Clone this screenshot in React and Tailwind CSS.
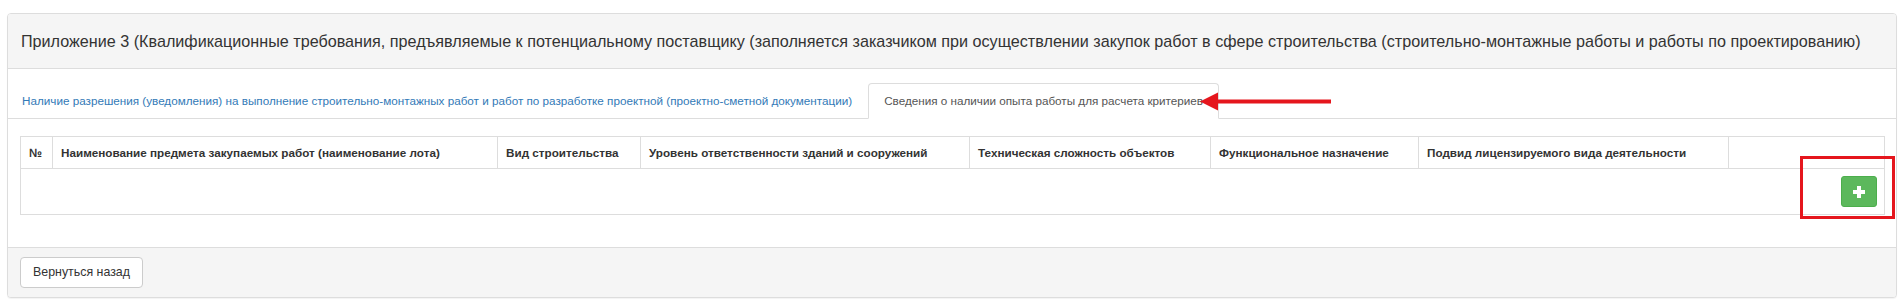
import React from "react";

const columns = [
  { title: "№", width: 32 },
  { title: "Наименование предмета закупаемых работ (наименование лота)", width: 445 },
  { title: "Вид строительства", width: 143 },
  { title: "Уровень ответственности зданий и сооружений", width: 329 },
  { title: "Техническая сложность объектов", width: 241 },
  { title: "Функциональное назначение", width: 208 },
  { title: "Подвид лицензируемого вида деятельности", width: 310 },
  { title: "", width: 156 },
];

const PlusIcon = () => (
  <svg width="12" height="12" viewBox="0 0 12 12">
    <rect x="4" y="0" width="4" height="12" fill="#fff" />
    <rect x="0" y="4" width="12" height="4" fill="#fff" />
  </svg>
);

const Tabs = () => (
  <ul className="flex border-b border-[#ddd] pt-[14px]">
    <li className="-mb-px">
      <a className="block border border-transparent rounded-t-[4px] py-[9px] pl-[13px] pr-[15px] text-[11.7px] leading-[16px] text-[#337ab7]">
        Наличие разрешения (уведомления) на выполнение строительно-монтажных работ и работ по разработке проектной (проектно-сметной документации)
      </a>
    </li>
    <li className="-mb-px">
      <a className="block border border-[#ddd] border-b-white bg-white rounded-t-[4px] py-[9px] px-[15px] text-[11.7px] leading-[16px] text-[#555]">
        Сведения о наличии опыта работы для расчета критериев
      </a>
    </li>
  </ul>
);

export default function App() {
  return (
    <div className="min-h-[308px] bg-white pt-[13px] pl-[7px] pr-[5px] font-['Liberation_Sans',Arial,sans-serif] text-[#333]">
      <div className="relative border border-[#ddd] rounded-[4px] bg-white shadow-[0_1px_1px_rgba(0,0,0,0.05)]">
        <div className="h-[55px] flex items-center pl-[13px] bg-[#f5f5f5] border-b border-[#ddd] rounded-t-[3px] text-[16.17px]">
          Приложение 3 (Квалификационные требования, предъявляемые к потенциальному поставщику (заполняется заказчиком при осуществлении закупок работ в сфере строительства (строительно-монтажные работы и работы по проектированию)
        </div>

        <Tabs />

        <div className="pt-[17px] pl-[12px] pr-[13px] pb-[32px]">
          <table className="table-fixed w-[1864px] border-collapse border border-[#ddd]">
            <colgroup>
              {columns.map((col, i) => (
                <col key={i} style={{ width: col.width }} />
              ))}
            </colgroup>
            <thead>
              <tr>
                {columns.map((col, i) => (
                  <th
                    key={i}
                    className="border border-[#ddd] px-[8px] py-[7px] text-left align-bottom text-[11.7px] leading-[17px] font-bold whitespace-nowrap"
                  >
                    {col.title}
                  </th>
                ))}
              </tr>
            </thead>
            <tbody>
              <tr>
                <td colSpan={8} className="border border-[#ddd] py-[7px] pr-[7px] text-right">
                  <button
                    type="button"
                    className="inline-flex items-center justify-center w-[36px] h-[31px] bg-[#5cb85c] border border-[#4cae4c] rounded-[3px] align-middle"
                  >
                    <PlusIcon />
                  </button>
                </td>
              </tr>
            </tbody>
          </table>
        </div>

        <div className="bg-[#f5f5f5] border-t border-[#ddd] rounded-b-[3px] pt-[9px] pb-[9px] pl-[12px]">
          <button
            type="button"
            className="h-[31px] px-[12px] bg-white border border-[#ccc] rounded-[4px] text-[12.4px] text-[#333]"
          >
            Вернуться назад
          </button>
        </div>

        {/* annotation: arrow pointing at the active tab */}
        <svg
          className="absolute left-[1192px] top-[78px]"
          width="132"
          height="20"
          viewBox="0 0 132 20"
        >
          <line x1="14" y1="9.5" x2="131" y2="9.5" stroke="#e5161d" strokeWidth="4" />
          <polygon points="0,9.5 18,0.5 18,18.5" fill="#e5161d" />
        </svg>

        {/* annotation: box around the add button */}
        <div className="absolute left-[1792px] top-[142px] w-[95px] h-[63px] border-[3px] border-[#e5161d]"></div>
      </div>
    </div>
  );
}
